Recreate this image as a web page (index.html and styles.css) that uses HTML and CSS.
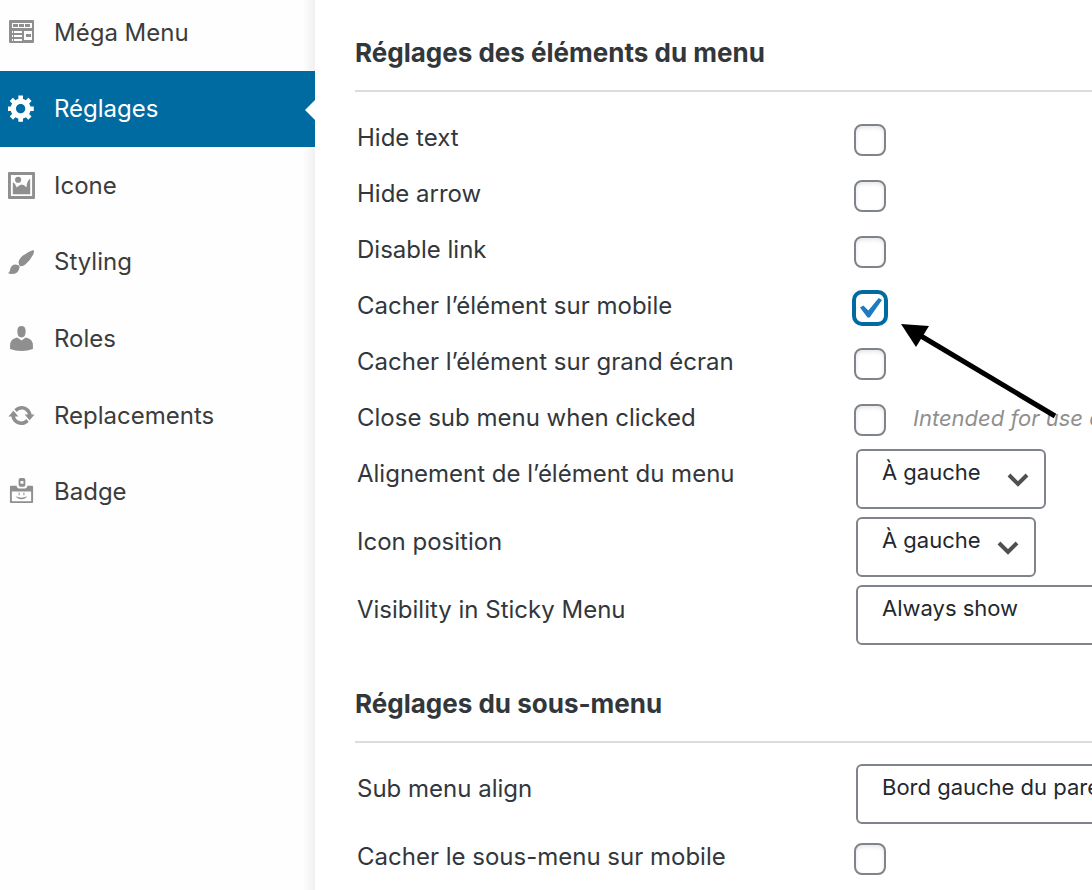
FILE: index.html
```html
<!DOCTYPE html>
<html lang="fr">
<head>
  <meta charset="UTF-8" />
  <meta name="viewport" content="width=device-width, initial-scale=1.0" />
  <title>Réglages des éléments du menu</title>
  <link rel="stylesheet" href="styles.css">
</head>
<body>
  <div class="layout">
    <nav class="sidebar">
      <div class="tabs">
        <a class="tab" href="#mega">
          <svg class="icon" viewBox="0 2 27 27"><path fill-rule="evenodd" d="M2 3h23q1 0 1 1v21q0 1-1 1H2q-1 0-1-1V4q0-1 1-1zM4 6v5h20V6zM4 14v2h1v-2zm2 0v2h8v-2zM4 18v2h1v-2zm2 0v2h8v-2zM4 22v2h1v-2zm2 0v2h8v-2zM16 14v9h8v-9z"/><path d="M5 7h5v3H5zm6 0h5v3h-5zm6 0h5v3h-5zM18 17h5v3h-5z"/></svg>
          <span>Méga Menu</span>
        </a>
        <a class="tab active" href="#reglages">
          <svg class="icon" viewBox="1.3 1.6 17.5 17.5"><path d="M18 12h-2.180c-0.170 0.700-0.440 1.350-0.810 1.930l1.540 1.540-2.100 2.100-1.540-1.540c-0.580 0.360-1.230 0.630-1.910 0.790v2.180h-3v-2.180c-0.680-0.160-1.330-0.430-1.910-0.790l-1.540 1.540-2.120-2.120 1.540-1.540c-0.360-0.580-0.630-1.230-0.790-1.910h-2.180v-2.970h2.170c0.160-0.700 0.440-1.350 0.800-1.940l-1.540-1.540 2.100-2.100 1.540 1.540c0.580-0.370 1.240-0.640 1.930-0.810v-2.180h3v2.180c0.680 0.160 1.330 0.430 1.910 0.790l1.540-1.540 2.120 2.120-1.540 1.540c0.360 0.590 0.640 1.240 0.800 1.940h2.170v2.970zM9.500 13.500c1.660 0 3-1.340 3-3s-1.340-3-3-3-3 1.340-3 3 1.340 3 3 3z"/></svg>
          <span>Réglages</span>
        </a>
        <a class="tab" href="#icone">
          <svg class="icon" viewBox="0 0 28 28"><path fill-rule="evenodd" d="M1 0h26q1 0 1 1v26q0 1-1 1H1q-1 0-1-1V1q0-1 1-1zM3 3v22h22V3z"/><circle cx="10.500" cy="8" r="3.200"/><path d="M5 23V11q2 0 4 5 2-2 5-3 3 0 5 3 1-8 4-9v16z"/></svg>
          <span>Icone</span>
        </a>
        <a class="tab" href="#styling">
          <svg class="icon" viewBox="0 0 28 28"><path d="M26 2q2 1 0 5-3 6-8 10-3 2-5 2-2-1-2-4 0-3 3-6 6-5 12-7zM11 18q2 1 0 5-2 4-7 4-3 0-4-1 2-1 2-3 1-6 6-6z"/></svg>
          <span>Styling</span>
        </a>
        <a class="tab" href="#roles">
          <svg class="icon" viewBox="1 1 26 26"><path d="M14 2q4 0 4 5 0 6-4 6t-4-6q0-5 4-5zM10 13l4 3 4-3q7 1 7 8v3q-5 2-11 2T3 24v-3q0-7 7-8z"/></svg>
          <span>Roles</span>
        </a>
        <a class="tab" href="#replacements">
          <svg class="icon" viewBox="0.500 0.500 19 19"><path d="M10.200 3.280c3.530 0 6.430 2.610 6.920 6h2.080l-3.500 4-3.500-4h2.320c-0.450-1.970-2.210-3.450-4.320-3.450-1.450 0-2.730 0.710-3.540 1.780l-1.710-1.950c1.280-1.460 3.150-2.380 5.250-2.380zM9.800 16.720c-3.520 0-6.430-2.610-6.920-6h-2.080l3.500-4c1.170 1.330 2.330 2.670 3.500 4h-2.320c0.450 1.970 2.210 3.450 4.320 3.450 1.450 0 2.730-0.710 3.540-1.780l1.710 1.950c-1.280 1.460-3.150 2.380-5.250 2.380z"/></svg>
          <span>Replacements</span>
        </a>
        <a class="tab" href="#badge">
          <svg class="icon" viewBox="0 0 28 28"><path fill-rule="evenodd" d="M13 0h3q2 0 2 2v5q0 2-2 2h-3q-2 0-2-2V2q0-2 2-2zm0 3v3h3V3zM3 8h6q0 3 4 3h3q4 0 4-3h5q1 0 1 1v16q0 1-1 1H3q-1 0-1-1V9q0-1 1-1zm1 6v10h20V14z"/><path d="M11 15h1v3h-1zm5 0h1v3h-1zM8 19q6 3 12 0-2 3-6 3t-6-3z"/></svg>
          <span>Badge</span>
        </a>
      </div>
    </nav>

    <main class="content">
      <h2>Réglages des éléments du menu</h2>
      <div class="settings">
        <div class="row">
          <label for="hide-text">Hide text</label>
          <input type="checkbox" id="hide-text">
        </div>
        <div class="row">
          <label for="hide-arrow">Hide arrow</label>
          <input type="checkbox" id="hide-arrow">
        </div>
        <div class="row">
          <label for="disable-link">Disable link</label>
          <input type="checkbox" id="disable-link">
        </div>
        <div class="row">
          <label for="hide-mobile">Cacher l’élément sur mobile</label>
          <div class="pointed">
            <input type="checkbox" id="hide-mobile" checked>
            <svg class="arrow" viewBox="0 0 160 100"><path d="M0 0l28 2-13 21z"/><path d="M20 12l134 80" stroke="#000" stroke-width="5"/></svg>
          </div>
        </div>
        <div class="row">
          <label for="hide-desktop">Cacher l’élément sur grand écran</label>
          <input type="checkbox" id="hide-desktop">
        </div>
        <div class="row">
          <label for="close-sub">Close sub menu when clicked</label>
          <input type="checkbox" id="close-sub">
          <em class="hint">Intended for use on</em>
        </div>
        <div class="row">
          <label for="item-align">Alignement de l’élément du menu</label>
          <div class="select">
            <select id="item-align" class="medium"><option>À gauche</option></select>
            <svg class="chevron" viewBox="0 0 22 14"><path d="M2 2l9 9 9-9"/></svg>
          </div>
        </div>
        <div class="row">
          <label for="icon-position">Icon position</label>
          <div class="select">
            <select id="icon-position" class="small"><option>À gauche</option></select>
            <svg class="chevron" viewBox="0 0 22 14"><path d="M2 2l9 9 9-9"/></svg>
          </div>
        </div>
        <div class="row">
          <label for="sticky">Visibility in Sticky Menu</label>
          <div class="select">
            <select id="sticky" class="large"><option>Always show</option></select>
          </div>
        </div>
      </div>

      <h2>Réglages du sous-menu</h2>
      <div class="settings">
        <div class="row">
          <label for="sub-align">Sub menu align</label>
          <div class="select">
            <select id="sub-align" class="large"><option>Bord gauche du parent</option></select>
          </div>
        </div>
        <div class="row">
          <label for="sub-mobile">Cacher le sous-menu sur mobile</label>
          <input type="checkbox" id="sub-mobile">
        </div>
      </div>
    </main>
  </div>
</body>
</html>
```

FILE: styles.css
```css
* {
  box-sizing: border-box;
}
body {
  margin: 0;
  background: #fff;
  color: #32373c;
  font-family: Inter, "Liberation Sans", sans-serif;
  font-size: 24px;
  overflow: hidden;
}
.layout {
  display: flex;
  min-height: 100vh;
}

/* sidebar */
.sidebar {
  flex: 0 0 315px;
  background: #fefefe linear-gradient(to left, #f0f0f0, #fefefe) right / 12px 100% no-repeat;
}
.tabs {
  display: grid;
  grid-auto-rows: 1fr;
  height: 536px;
  margin-top: -6px;
}
.tab {
  position: relative;
  display: flex;
  align-items: center;
  gap: 19px;
  padding-left: 8px;
  color: #3c3c3c;
  text-decoration: none;
}
.icon {
  width: 27px;
  height: 27px;
  fill: #8f8f8f;
}
.active {
  background: #006ba1;
  color: #fff;
}
.active .icon {
  fill: #fff;
}
.active::after {
  content: "";
  position: absolute;
  right: 0;
  top: 29px;
  border: 10px solid transparent;
  border-right-color: #fff;
  border-left: 0;
}

/* settings */
.content {
  flex: 1;
  min-width: 0;
  padding-left: 40px;
}
h2 {
  margin: 0;
  padding: 32px 0 16px;
  border-bottom: 2px solid #dcdcdc;
  font-size: 26px;
  font-weight: 700;
  line-height: 42px;
}
.settings {
  padding: 18px 0 1px;
}
.row {
  display: flex;
  align-items: flex-start;
  white-space: nowrap;
}
.row label {
  flex: 0 0 499px;
  padding-left: 2px;
  line-height: 56px;
}
input[type="checkbox"] {
  appearance: none;
  flex: none;
  display: block;
  width: 32px;
  height: 32px;
  margin: 14px 0 0;
  border: 2px solid #7e8489;
  border-radius: 8px;
  background: #fff;
  box-shadow: inset 0 2px 4px rgba(0, 0, 0, 0.1);
}
input[type="checkbox"]:checked {
  border-color: #006ba1;
  box-shadow: 0 0 0 2px #006ba1;
}
input[type="checkbox"]:checked::before {
  content: "";
  display: block;
  width: 22px;
  height: 20px;
  margin: 4px;
  background: #1e7bbf;
  clip-path: polygon(0 48%, 15% 38%, 38% 62%, 85% 0, 100% 10%, 44% 98%, 34% 98%);
}
.pointed {
  position: relative;
}
.arrow {
  position: absolute;
  left: 47px;
  top: 46px;
  width: 160px;
  height: 100px;
}
.hint {
  margin-left: 27px;
  color: #8f8f8f;
  font-size: 22px;
  line-height: 56px;
}
.select {
  position: relative;
  flex: none;
  margin: 3px 0 5px 2px;
}
select {
  appearance: none;
  display: block;
  height: 60px;
  padding: 0 0 14px 24px;
  border: 2px solid #7e8489;
  border-radius: 6px;
  background: #fff;
  color: #23282d;
  font-family: inherit;
  font-size: 22px;
}
.small {
  width: 180px;
}
.medium {
  width: 190px;
}
.large {
  width: 320px;
}
.chevron {
  position: absolute;
  right: 17px;
  top: 24px;
  width: 22px;
  height: 14px;
  fill: none;
  stroke: #505050;
  stroke-width: 4;
  pointer-events: none;
}
```
